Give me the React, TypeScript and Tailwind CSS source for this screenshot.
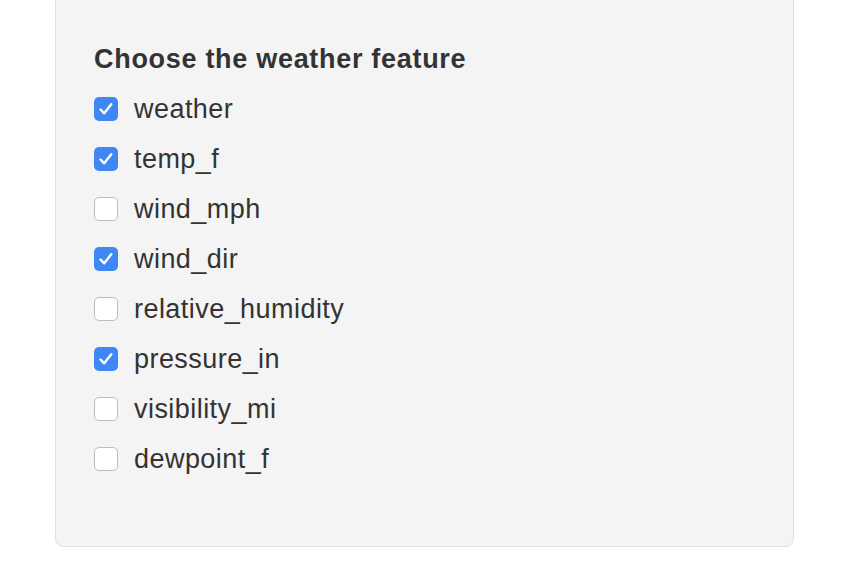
import React from "react";

const items: [string, boolean][] = [
  ["weather", true],
  ["temp_f", true],
  ["wind_mph", false],
  ["wind_dir", true],
  ["relative_humidity", false],
  ["pressure_in", true],
  ["visibility_mi", false],
  ["dewpoint_f", false],
];

function Box({ checked }: { checked: boolean }) {
  if (checked) {
    return (
      <span className="flex h-[24px] w-[24px] shrink-0 items-center justify-center rounded-[5px] bg-[#3f87f5]">
        <svg width="24" height="24" viewBox="0 0 24 24" fill="none">
          <path d="M6.5 12.5 L10.2 16.3 L17.3 7.2" stroke="white" strokeWidth="2.4" strokeLinecap="round" strokeLinejoin="round" />
        </svg>
      </span>
    );
  }
  return <span className="h-[24px] w-[24px] shrink-0 rounded-[5px] border border-[#bdbdbd] bg-white" />;
}

export default function App() {
  return (
    <div className="min-h-[582px] bg-white px-[55px] font-['Liberation_Sans',Arial,sans-serif] text-[#333333]">
      <div className="-mt-[10px] w-[739px] rounded-[8px] border border-[#e0e0e0] bg-[#f4f4f4] pl-[38px] pt-[52px] pb-[62px] shadow-[inset_0_1px_1px_rgba(0,0,0,0.05)]">
        <div className="h-[32px] text-[27px] font-bold leading-[32px] tracking-[0.7px]">Choose the weather feature</div>
        <div className="mt-[9px] flex flex-col">
          {items.map(([name, checked]) => (
            <label key={name} className="flex h-[50px] items-center">
              <Box checked={checked} />
              <span className="ml-[16px] text-[27px] leading-[32px] tracking-[0.45px]">{name}</span>
            </label>
          ))}
        </div>
      </div>
    </div>
  );
}
